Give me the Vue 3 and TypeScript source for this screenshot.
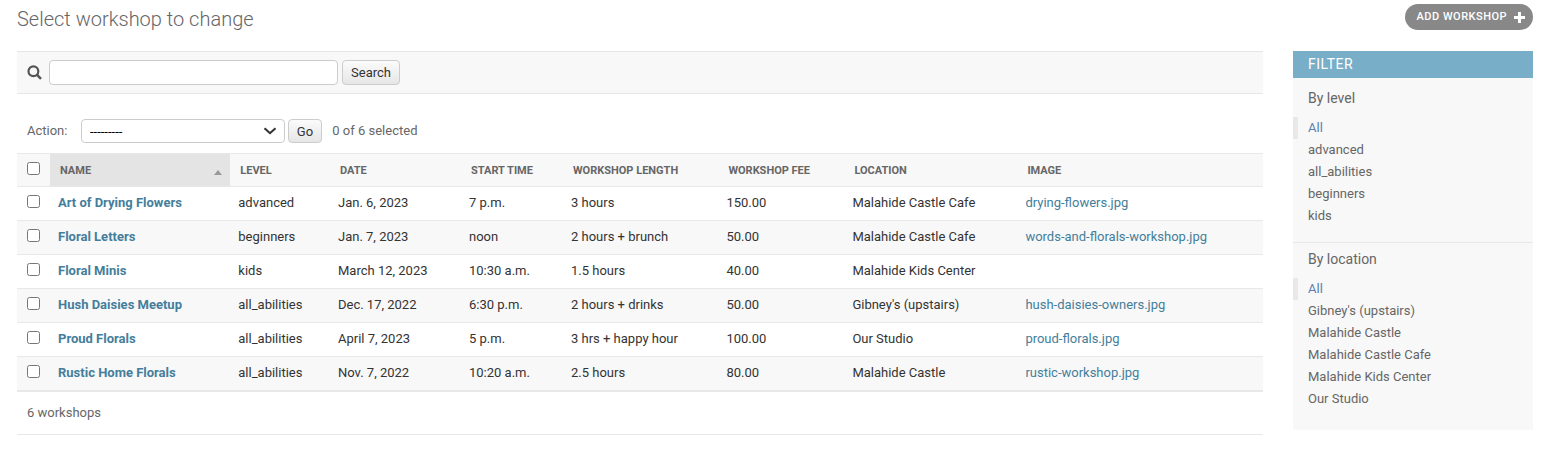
<script setup lang="ts">
import { ref } from 'vue'

interface Workshop {
  name: string
  level: string
  date: string
  start: string
  length: string
  fee: string
  location: string
  image: string
}

const workshops: Workshop[] = [
  { name: 'Art of Drying Flowers', level: 'advanced', date: 'Jan. 6, 2023', start: '7 p.m.', length: '3 hours', fee: '150.00', location: 'Malahide Castle Cafe', image: 'drying-flowers.jpg' },
  { name: 'Floral Letters', level: 'beginners', date: 'Jan. 7, 2023', start: 'noon', length: '2 hours + brunch', fee: '50.00', location: 'Malahide Castle Cafe', image: 'words-and-florals-workshop.jpg' },
  { name: 'Floral Minis', level: 'kids', date: 'March 12, 2023', start: '10:30 a.m.', length: '1.5 hours', fee: '40.00', location: 'Malahide Kids Center', image: '' },
  { name: 'Hush Daisies Meetup', level: 'all_abilities', date: 'Dec. 17, 2022', start: '6:30 p.m.', length: '2 hours + drinks', fee: '50.00', location: "Gibney's (upstairs)", image: 'hush-daisies-owners.jpg' },
  { name: 'Proud Florals', level: 'all_abilities', date: 'April 7, 2023', start: '5 p.m.', length: '3 hrs + happy hour', fee: '100.00', location: 'Our Studio', image: 'proud-florals.jpg' },
  { name: 'Rustic Home Florals', level: 'all_abilities', date: 'Nov. 7, 2022', start: '10:20 a.m.', length: '2.5 hours', fee: '80.00', location: 'Malahide Castle', image: 'rustic-workshop.jpg' },
]

const columns = ['Level', 'Date', 'Start time', 'Workshop length', 'Workshop fee', 'Location', 'Image']

const filters = [
  { title: 'By level', options: ['All', 'advanced', 'all_abilities', 'beginners', 'kids'] },
  { title: 'By location', options: ['All', "Gibney's (upstairs)", 'Malahide Castle', 'Malahide Castle Cafe', 'Malahide Kids Center', 'Our Studio'] },
]

const query = ref('')
const selected = ref<string[]>([])

function toggleAll(event: Event) {
  const checked = (event.target as HTMLInputElement).checked
  selected.value = checked ? workshops.map((w) => w.name) : []
}
</script>

<template>
  <div class="page">
    <header class="top">
      <h1>Select workshop to change</h1>
      <a class="add">
        <span>Add workshop</span>
        <svg width="11" height="11" viewBox="0 0 11 11"><path d="M4 0h3v4h4v3H7v4H4V7H0V4h4z" fill="#fff" /></svg>
      </a>
    </header>
    <div class="body">
      <main class="list">
        <form class="search" @submit.prevent>
          <svg class="glass" width="15" height="15" viewBox="0 0 15 15">
            <circle cx="6.4" cy="6.3" r="4.9" fill="none" stroke="#555" stroke-width="2.2" />
            <path d="M9.8 9.7L14 13.9" stroke="#555" stroke-width="2.5" />
          </svg>
          <input v-model="query" class="query" type="text" />
          <button class="btn search-btn" type="submit">Search</button>
        </form>
        <div class="actions">
          <span class="action-label">Action:</span>
          <div class="select">
            <span>---------</span>
            <svg width="14" height="8" viewBox="0 0 14 8"><path d="M1.5 1.2L7 6.2L12.5 1.2" fill="none" stroke="#333" stroke-width="2.1" /></svg>
          </div>
          <button class="btn go" type="button">Go</button>
          <span class="count">{{ selected.length }} of {{ workshops.length }} selected</span>
        </div>
        <div class="row head">
          <div class="check"><input type="checkbox" @change="toggleAll" /></div>
          <div class="sorted">Name<i class="arrow"></i></div>
          <div v-for="c in columns" :key="c">{{ c }}</div>
        </div>
        <div v-for="w in workshops" :key="w.name" class="row item">
          <div class="check"><input v-model="selected" type="checkbox" :value="w.name" /></div>
          <div class="name">{{ w.name }}</div>
          <div>{{ w.level }}</div>
          <div>{{ w.date }}</div>
          <div>{{ w.start }}</div>
          <div>{{ w.length }}</div>
          <div>{{ w.fee }}</div>
          <div>{{ w.location }}</div>
          <div class="link">{{ w.image }}</div>
        </div>
        <p class="paginator">{{ workshops.length }} workshops</p>
      </main>
      <aside class="filter">
        <h2>Filter</h2>
        <section v-for="f in filters" :key="f.title">
          <h3>{{ f.title }}</h3>
          <ul>
            <li v-for="(o, i) in f.options" :key="o" :class="{ active: i === 0 }">{{ o }}</li>
          </ul>
        </section>
      </aside>
    </div>
  </div>
</template>

<style>
body {
  margin: 0;
  background: #fff;
}
</style>

<style scoped>
.page,
.page * {
  box-sizing: border-box;
}
.page {
  height: 464px;
  padding: 0 24px 0 17px;
  overflow: hidden;
  font-family: Roboto, 'Liberation Sans', sans-serif;
  font-size: 13px;
  color: #333;
}
.top {
  display: flex;
  justify-content: space-between;
  align-items: flex-start;
  height: 51px;
  padding-top: 4px;
}
h1 {
  margin: 4px 0 0;
  font-size: 20px;
  line-height: 23px;
  font-weight: 300;
  color: #666;
}
.add {
  display: flex;
  align-items: center;
  justify-content: space-between;
  width: 128px;
  height: 26px;
  padding: 0 8px 0 11.5px;
  border-radius: 13px;
  background: #888;
  color: #fff;
  font-size: 11px;
  line-height: 26px;
  font-weight: 500;
  letter-spacing: 0.5px;
  text-transform: uppercase;
  white-space: nowrap;
}
.body {
  display: flex;
  gap: 30px;
  align-items: flex-start;
}
.list {
  width: 1246px;
}
.search {
  display: flex;
  align-items: center;
  height: 43px;
  padding-left: 10px;
  background: #f8f8f8;
  border-top: 1px solid #e6e6e6;
  border-bottom: 1px solid #e6e6e6;
}
.glass {
  margin-right: 7px;
}
.query {
  width: 289px;
  height: 25px;
  padding: 2px 5px;
  border: 1px solid #ccc;
  border-radius: 4px;
  outline: none;
  font: inherit;
}
.btn {
  padding: 0;
  border: 1px solid #ccc;
  border-radius: 4px;
  background: linear-gradient(#fbfbfb, #e6e6e6);
  color: #333;
  font: inherit;
}
.search-btn {
  width: 58px;
  height: 25px;
  margin-left: 4px;
}
.actions {
  display: flex;
  align-items: center;
  height: 59px;
  padding: 15px 0 0 10px;
  color: #666;
}
.action-label {
  width: 54px;
}
.action-label,
.count {
  padding-bottom: 2px;
}
.select {
  display: flex;
  align-items: center;
  justify-content: space-between;
  width: 204px;
  height: 24px;
  padding: 0 7px 0 8px;
  border: 1px solid #ccc;
  border-radius: 4px;
  background: #fff;
  color: #000;
}
.go {
  width: 34px;
  height: 24px;
  margin: 0 10.3px 0 3px;
}
.row {
  display: grid;
  grid-template-columns: 33px 180.3px 99.7px 131px 102px 155.4px 126px 173px 1fr;
  border-bottom: 1px solid #e8e8e8;
}
.row > div {
  white-space: nowrap;
}
.head {
  height: 34px;
  border-top: 1px solid #e8e8e8;
  background: #f8f8f8;
  color: #666;
  font-size: 11px;
  line-height: 34px;
  font-weight: 700;
  text-transform: uppercase;
}
.head > div {
  height: 32px;
  padding-left: 10px;
}
.head .sorted {
  display: flex;
  justify-content: space-between;
  padding-right: 8px;
  background: #e4e4e4;
}
.arrow {
  height: 5px;
  margin-top: 16px;
  border: 4px solid transparent;
  border-top: 0;
  border-bottom: 5px solid #999;
}
.item {
  height: 34px;
  line-height: 31px;
}
.item:nth-child(odd) {
  background: #f8f8f8;
}
.item > div {
  padding-left: 8px;
}
.row > .check {
  padding: 8px 0 0 10px;
  line-height: 0;
}
.check input {
  width: 13px;
  height: 13px;
  margin: 0;
}
.name {
  color: #447e9b;
  font-weight: 700;
}
.link {
  color: #447e9b;
}
.paginator {
  height: 44px;
  margin: 0;
  padding-left: 10px;
  border-top: 1px solid #e8e8e8;
  border-bottom: 1px solid #e8e8e8;
  color: #666;
  line-height: 42px;
}
.filter {
  width: 240px;
  height: 379px;
  background: #f8f8f8;
  color: #666;
}
h2 {
  height: 27px;
  margin: 0;
  padding-left: 15px;
  background: #79aec8;
  color: #fff;
  font-size: 14px;
  line-height: 26px;
  font-weight: 400;
  letter-spacing: 0.5px;
  text-transform: uppercase;
}
section {
  height: 187px;
}
section:first-of-type {
  height: 165px;
  padding-top: 4px;
  border-bottom: 1px solid #e8e8e8;
}
h3 {
  height: 35px;
  margin: 0;
  padding-left: 15px;
  font-size: 14px;
  line-height: 32px;
  font-weight: 400;
}
ul {
  margin: 0;
  padding: 0;
  list-style: none;
}
li {
  height: 22px;
  padding-left: 10px;
  border-left: 5px solid transparent;
  line-height: 21px;
}
.active {
  border-left-color: #e8e8e8;
  color: #5b80b2;
}
</style>
